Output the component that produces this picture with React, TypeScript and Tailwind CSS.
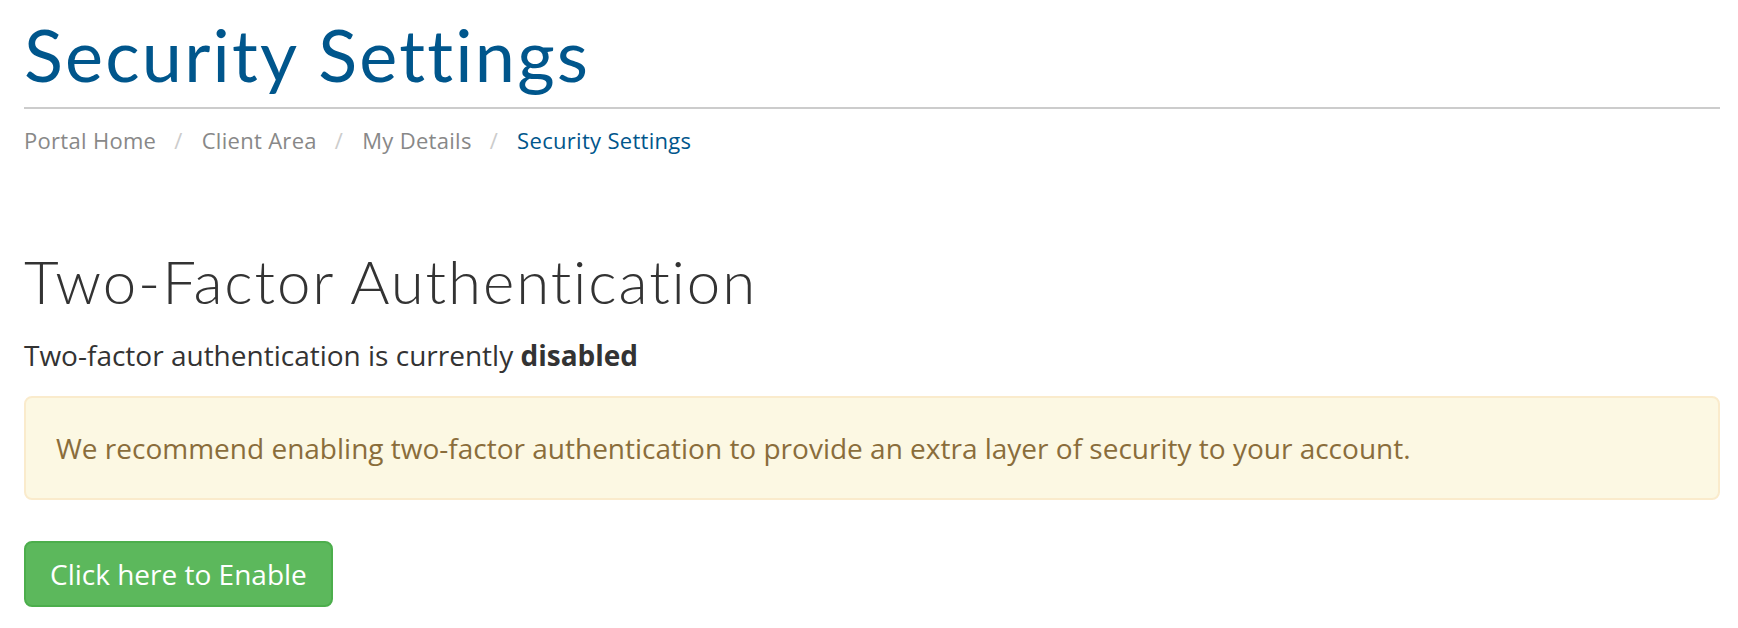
const crumbs = ['Portal Home', 'Client Area', 'My Details']

export default function App() {
  return (
    <div className="min-h-[628px] bg-white pl-[24px] pr-[18px] font-['Open_Sans',sans-serif] text-[#333]">
      <div className="border-b-2 border-[#cccccc] pt-[14px] pb-[13px]">
        <h1 className="font-['Lato',sans-serif] text-[72px] leading-[80px] font-normal tracking-[2.2px] text-[#00568c]">
          Security Settings
        </h1>
      </div>

      <ol className="mt-[16px] flex items-baseline text-[22px] leading-[30px] tracking-[0.3px]">
        {crumbs.map((c) => (
          <li key={c} className="flex items-baseline">
            <span className="text-[#888]">{c}</span>
            <span className="pl-[18px] pr-[13px] text-[#ccc]">/&nbsp;</span>
          </li>
        ))}
        <li className="text-[#00568c]">Security Settings</li>
      </ol>

      <h2 className="mt-[93px] font-['Lato',sans-serif] text-[60px] leading-[66px] font-light tracking-[1.9px] text-[#333]">
        Two-Factor Authentication
      </h2>

      <p className="mt-[21px] text-[28px] leading-[40px]">
        Two-factor authentication is currently <strong className="font-bold">disabled</strong>
      </p>

      <div className="mt-[21px] rounded-[8px] border-2 border-[#faebcc] bg-[#fcf8e3] p-[30px] text-[28px] leading-[40px] text-[#8a6d3b]">
        We recommend enabling two-factor authentication to provide an extra layer of security to your account.
      </div>

      <button className="mt-[41px] rounded-[8px] border-2 border-[#4cae4c] bg-[#5cb85c] px-[24px] py-[11px] text-[28px] leading-[40px] text-white">
        Click here to Enable
      </button>
    </div>
  )
}
